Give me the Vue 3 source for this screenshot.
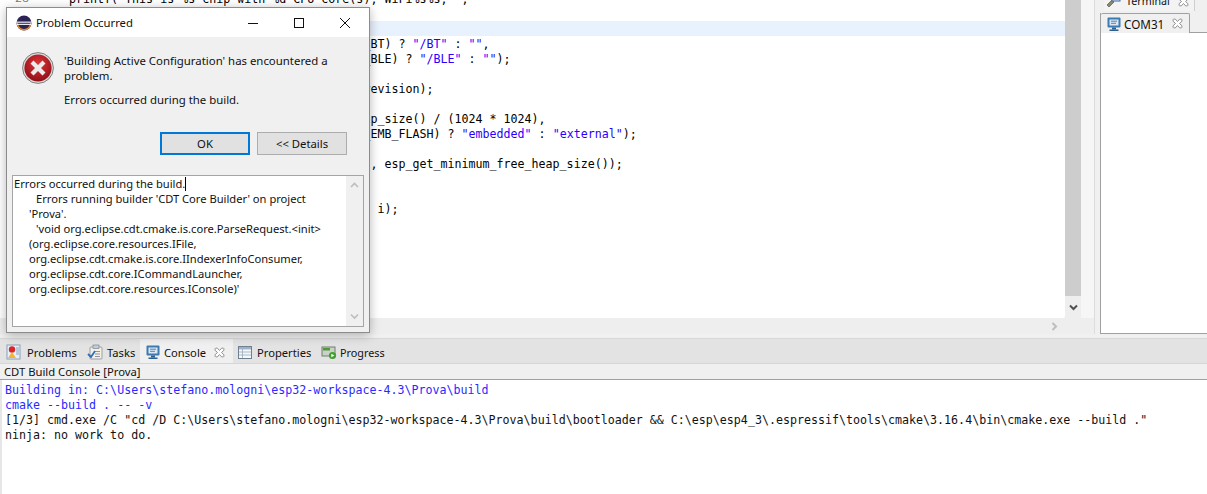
<script setup>
const gutterLines = ['23', '24', '25', '26', '27', '28', '29', '30', '31', '32', '33', '34', '35', '36', '37', '38', '39', '40', '41', '42', '43']
const code = [
  [{ t: '    printf("This is %s chip with %d CPU core(s), WiFi%s%s, ",' }],
  [{ t: ' ' }],
  [{ t: ' ' }],
  [{ t: '            (chip_info.features & CHIP_FEATURE_BT) ? ' }, { t: '"/BT"', s: 1 }, { t: ' : ' }, { t: '""', s: 1 }, { t: ',' }],
  [{ t: '            (chip_info.features & CHIP_FEATURE_BLE) ? ' }, { t: '"/BLE"', s: 1 }, { t: ' : ' }, { t: '""', s: 1 }, { t: ');' }],
  [{ t: ' ' }],
  [{ t: '    printf("silicon revision %d, ", chip_info.revision);' }],
  [{ t: ' ' }],
  [{ t: '    printf("%dMB %s flash\\n", spi_flash_get_chip_size() / (1024 * 1024),' }],
  [{ t: '            (chip_info.features & CHIP_FEATURE_EMB_FLASH) ? ' }, { t: '"embedded"', s: 1 }, { t: ' : ' }, { t: '"external"', s: 1 }, { t: ');' }],
  [{ t: ' ' }],
  [{ t: '    printf("Minimum free heap size: %d bytes\\n", esp_get_minimum_free_heap_size());' }],
  [{ t: ' ' }],
  [{ t: ' ' }],
  [{ t: '        printf("Restarting in %d seconds...\\n", i);' }]
]
const detailLines = [
  { text: 'Errors occurred during the build.', cls: 'l0', caret: true },
  { text: "Errors running builder 'CDT Core Builder' on project", cls: 'l1' },
  { text: "'Prova'.", cls: 'l2' },
  { text: "'void org.eclipse.cdt.cmake.is.core.ParseRequest.<init>", cls: 'l1' },
  { text: '(org.eclipse.core.resources.IFile,', cls: 'l2' },
  { text: 'org.eclipse.cdt.cmake.is.core.IIndexerInfoConsumer,', cls: 'l2' },
  { text: 'org.eclipse.cdt.core.ICommandLauncher,', cls: 'l2' },
  { text: 'org.eclipse.cdt.core.resources.IConsole)\'', cls: 'l2' }
]
</script>

<template>
  <div class="page">
    <div class="top">
      <section class="editor">
        <div class="editor-main">
          <div class="code-area">
            <div class="gutter">
              <div v-for="n in gutterLines" :key="n">{{ n }}</div>
            </div>
            <div class="code">
              <div v-for="(line, i) in code" :key="i" class="code-line" :class="{ current: i === 2 }"><span v-for="(p, j) in line" :key="j" :class="{ str: p.s }">{{ p.t }}</span></div>
            </div>
          </div>
          <div class="vscroll">
            <div class="vthumb"></div>
            <svg class="vdown" width="9" height="7" viewBox="0 0 9 7"><path d="M1 1.5 L4.5 5 L8 1.5" fill="none" stroke="#505050" stroke-width="2"/></svg>
          </div>
          <div class="ruler"></div>
        </div>
        <div class="hscroll">
          <svg width="7" height="9" viewBox="0 0 7 9"><path d="M1.5 1 L5 4.5 L1.5 8" fill="none" stroke="#bdbdbd" stroke-width="2"/></svg>
        </div>
      </section>
      <aside class="right">
        <div class="tab-strip-up">
          <div class="term-tab">
            <svg width="15" height="14" viewBox="0 0 15 14"><path d="M1 11 L6 6 L8 8 L3 13 Z" fill="#8a8a6a" stroke="#444" stroke-width=".6"/><rect x="6" y="1" width="8" height="6" fill="#dfe8f4" stroke="#3f66a0"/></svg>
            <span class="term-name">Terminal</span>
            <svg class="x" width="11" height="11" viewBox="0 0 10 10"><path d="M1.5 1 L3 1 L5 3.2 L7 1 L8.5 1 L9 1.5 L9 3 L6.8 5 L9 7 L9 8.5 L8.5 9 L7 9 L5 6.8 L3 9 L1.5 9 L1 8.5 L1 7 L3.2 5 L1 3 L1 1.5 Z" fill="#fff" stroke="#8f8f8f" stroke-width=".9"/></svg>
          </div>
        </div>
        <div class="com-row">
          <div class="com-tab">
            <svg width="16" height="16" viewBox="0 0 16 16"><rect x="1.5" y="1.5" width="13" height="10" rx="1" fill="#3d7ab0"/><rect x="3.5" y="3.5" width="9" height="6" fill="#dbe8f4"/><path d="M5 5.2H11M5 7.3H10" stroke="#3d7ab0" stroke-width=".9"/><rect x="6" y="11.5" width="4" height="2" fill="#2d5f8c"/><rect x="3.5" y="13.5" width="9" height="1.5" fill="#2d5f8c"/></svg>
            <span class="com-name">COM31</span>
            <svg class="x" width="11" height="11" viewBox="0 0 10 10"><path d="M1.5 1 L3 1 L5 3.2 L7 1 L8.5 1 L9 1.5 L9 3 L6.8 5 L9 7 L9 8.5 L8.5 9 L7 9 L5 6.8 L3 9 L1.5 9 L1 8.5 L1 7 L3.2 5 L1 3 L1 1.5 Z" fill="#fff" stroke="#8f8f8f" stroke-width=".9"/></svg>
          </div>
        </div>
        <div class="com-body"></div>
      </aside>
    </div>

    <div class="gap"></div>

    <nav class="tabs">
      <div class="tab t-problems">
        <svg width="16" height="16" viewBox="0 0 16 16"><rect x="1" y="1" width="13" height="14" fill="#e8eef6" stroke="#8aa0bc"/><circle cx="6" cy="5.5" r="3.2" fill="#d8262c"/><path d="M2 14 L6 8 L10 14 Z" fill="#f2b632"/><rect x="10" y="3" width="3" height="8" fill="#b9c8da"/></svg>
        <span>Problems</span>
      </div>
      <div class="tab t-tasks">
        <svg width="16" height="16" viewBox="0 0 16 16"><rect x="3" y="3" width="12" height="12" rx="1" fill="#f4f1e4" stroke="#9a9fa8"/><rect x="6" y="1" width="6" height="3.5" fill="#c5ccd6" stroke="#7d8794" stroke-width=".7"/><path d="M8 7.5H13M8 10H13M8 12.5H13" stroke="#8b95a5" stroke-width="1"/><path d="M1 10 L4 13 L8 7" fill="none" stroke="#2f6fc0" stroke-width="1.8"/></svg>
        <span>Tasks</span>
      </div>
      <div class="tab active">
        <svg width="16" height="16" viewBox="0 0 16 16"><rect x="1.5" y="1.5" width="13" height="10" rx="1" fill="#3d7ab0"/><rect x="3.5" y="3.5" width="9" height="6" fill="#dbe8f4"/><path d="M5 5.2H11M5 7.3H10" stroke="#3d7ab0" stroke-width=".9"/><rect x="6" y="11.5" width="4" height="2" fill="#2d5f8c"/><rect x="3.5" y="13.5" width="9" height="1.5" fill="#2d5f8c"/></svg>
        <span>Console</span>
        <svg class="x" width="11" height="11" viewBox="0 0 10 10"><path d="M1.5 1 L3 1 L5 3.2 L7 1 L8.5 1 L9 1.5 L9 3 L6.8 5 L9 7 L9 8.5 L8.5 9 L7 9 L5 6.8 L3 9 L1.5 9 L1 8.5 L1 7 L3.2 5 L1 3 L1 1.5 Z" fill="#fff" stroke="#8f8f8f" stroke-width=".9"/></svg>
      </div>
      <div class="tab t-props">
        <svg width="16" height="16" viewBox="0 0 16 16"><rect x="1.5" y="2.5" width="13" height="12" fill="#f5f8fb" stroke="#6f7f92"/><rect x="2" y="3" width="12" height="2.4" fill="#9db2c9"/><path d="M5.5 5V14M2 8H14M2 11H14" stroke="#9aa8b8" stroke-width=".8"/></svg>
        <span>Properties</span>
      </div>
      <div class="tab t-progress">
        <svg width="16" height="16" viewBox="0 0 16 16"><rect x="1" y="3" width="13" height="9" fill="#c9d3c5" stroke="#6f7f6f"/><rect x="2" y="4" width="7" height="2.5" fill="#4e9a3a"/><circle cx="11.5" cy="11.5" r="3.6" fill="#43a02f"/><path d="M10.3 9.7 L13.4 11.5 L10.3 13.3 Z" fill="#fff"/></svg>
        <span class="progress-name">Progress</span>
      </div>
    </nav>

    <div class="console-label">CDT Build Console [Prova]</div>

    <pre class="console"><span class="blue">Building in: C:\Users\stefano.mologni\esp32-workspace-4.3\Prova\build
cmake --build . -- -v
</span>[1/3] cmd.exe /C "cd /D C:\Users\stefano.mologni\esp32-workspace-4.3\Prova\build\bootloader &amp;&amp; C:\esp\esp4_3\.espressif\tools\cmake\3.16.4\bin\cmake.exe --build ."
ninja: no work to do.</pre>

    <div class="dialog">
      <header class="titlebar">
        <svg class="logo" width="16" height="16" viewBox="0 0 16 16">
          <circle cx="8" cy="8" r="7.5" fill="#2c2255"/>
          <path d="M0.5 8 A7.5 7.5 0 0 0 15.5 8 L14 8 A6 6 0 0 1 2 8 Z" fill="#f7941e" opacity=".9"/>
          <rect x="0.5" y="6.6" width="15" height="1.1" fill="#fff"/>
          <rect x="0.8" y="8.8" width="14.4" height="1.1" fill="#fff"/>
        </svg>
        <span class="title">Problem Occurred</span>
        <div class="winbtns">
          <svg width="12" height="12" viewBox="0 0 12 12"><path d="M1 6.5H11" stroke="#111" stroke-width="1"/></svg>
          <svg width="12" height="12" viewBox="0 0 12 12"><rect x="1.5" y="1.5" width="9" height="9" fill="none" stroke="#111"/></svg>
          <svg width="12" height="12" viewBox="0 0 12 12"><path d="M1 1L11 11M11 1L1 11" stroke="#111" stroke-width="1"/></svg>
        </div>
      </header>
      <div class="dialog-body">
        <div class="message">
          <svg class="err" width="32" height="32" viewBox="0 0 32 32">
            <defs>
              <radialGradient id="rg" cx=".5" cy=".35" r=".7"><stop offset="0" stop-color="#e0343a"/><stop offset="1" stop-color="#8a0c14"/></radialGradient>
            </defs>
            <circle cx="16" cy="16" r="15.4" fill="#dcdcdc" stroke="#7f7f7f"/>
            <circle cx="16" cy="16" r="13.6" fill="url(#rg)"/>
            <path d="M8.5 11.5 L11.5 8.5 L16 13 L20.5 8.5 L23.5 11.5 L19 16 L23.5 20.5 L20.5 23.5 L16 19 L11.5 23.5 L8.5 20.5 L13 16 Z" fill="#ececec"/>
          </svg>
          <div class="msg-text">
            <p>'Building Active Configuration' has encountered a problem.</p>
            <p class="sub">Errors occurred during the build.</p>
          </div>
        </div>
        <div class="buttons">
          <button class="btn default">OK</button>
          <button class="btn">&lt;&lt; Details</button>
        </div>
        <div class="details">
          <div class="details-text">
            <div v-for="(l, i) in detailLines" :key="i" :class="l.cls">{{ l.text }}<span v-if="l.caret" class="caret"></span></div>
          </div>
          <div class="d-scroll">
            <svg width="9" height="7" viewBox="0 0 9 7"><path d="M1 5 L4.5 1.5 L8 5" fill="none" stroke="#bdbdbd" stroke-width="1.6"/></svg>
            <svg width="9" height="7" viewBox="0 0 9 7"><path d="M1 1.5 L4.5 5 L8 1.5" fill="none" stroke="#bdbdbd" stroke-width="1.6"/></svg>
          </div>
        </div>
      </div>
    </div>
  </div>
</template>

<style>
html, body { margin: 0; background: #fff; }
</style>

<style scoped>
.page {
  position: relative;
  width: 1207px;
  height: 494px;
  overflow: hidden;
  display: flex;
  flex-direction: column;
  background: #fff;
  font-family: "Noto Sans", sans-serif;
  font-size: 11.3px;
  color: #111;
}
.top { display: flex; height: 334px; background: #f0f0f0; flex: none; }
.editor { width: 1095px; display: flex; flex-direction: column; border-right: 1px solid #dcdcdc; box-sizing: border-box; }
.editor-main { flex: 1; display: flex; min-height: 0; }
.code-area { width: 1065px; flex: none; display: flex; background: #fff; overflow: hidden; border-bottom-right-radius: 2px; }
.gutter { width: 41px; flex: none; margin-top: -9px; text-align: right; box-sizing: border-box; padding-right: 12px; font: 11.67px/17px "Liberation Mono", monospace; color: #787878; }
.gutter div { height: 15px; }
.code { flex: 1; margin-top: -9px; font: 11.65px/17px "DejaVu Sans Mono", monospace; color: #000; white-space: pre; }
.code-line { height: 15px; }
.code-line.current { background: #e8f2fe; }
.str { color: #2a00ff; }
.vscroll { width: 16px; flex: none; background: #eeeeee; display: flex; flex-direction: column; align-items: center; justify-content: space-between; padding-bottom: 7px; box-sizing: border-box; position: relative; }
.vthumb { width: 100%; height: 296px; background: #cdcdcd; }
.ruler { flex: 1; background: #f6f6f6; }
.hscroll { height: 16px; flex: none; background: #eeeeee; display: flex; align-items: center; justify-content: flex-end; padding-right: 36px; }
.right { flex: 1; display: flex; flex-direction: column; padding-left: 5px; }
.tab-strip-up { height: 13px; overflow: hidden; display: flex; padding-left: 4px; flex: none; }
.term-tab { display: flex; align-items: center; gap: 5px; height: 20px; margin-top: -9px; width: 91px; background: #f3f3f3; box-sizing: border-box; border-right: 1px solid #cfcfcf; padding-left: 2px; flex: none; }
.term-name { font-size: 10.7px; }
.term-tab .x { margin-left: 3px; }
.com-row { height: 20px; flex: none; display: flex; box-sizing: border-box; border-left: 1px solid #a0a0a0; border-bottom: 1px solid #a0a0a0; }
.com-tab { width: 89px; height: 20px; box-sizing: border-box; background: #f0f0f0; border: 1px solid #a0a0a0; border-left: 0; border-bottom: 0; border-radius: 2px 2px 0 0; display: flex; align-items: center; gap: 2px; padding-left: 5px; }
.com-name { font-size: 11.7px; }
.com-tab .x { margin-left: 6px; }
.com-body { flex: 1; background: #fff; border-left: 1px solid #a0a0a0; border-bottom: 1px solid #a0a0a0; }
.gap { height: 5px; flex: none; background: #f0f0f0; border-bottom: 1px solid #d8d8d8; box-sizing: border-box; }
.tabs { height: 25px; flex: none; display: flex; background: #e3e3e3; border-bottom: 1px solid #d6d6d6; box-sizing: border-box; padding-left: 6px; font-size: 11.2px; }
.tab { display: flex; align-items: center; gap: 4px; height: 24px; box-sizing: border-box; padding-top: 2px; }
.t-problems { width: 81px; gap: 5px; }
.t-tasks { width: 53px; }
.tab.active { background: #f0f0f0; width: 93px; padding-left: 5px; gap: 3px; }
.t-props { width: 88px; padding-left: 4px; }
.t-progress { width: 70px; gap: 3px; }
.progress-name { font-size: 10.8px; }
.x { margin-left: 5px; }
.console-label { height: 16px; flex: none; background: #f0f0f0; border-bottom: 1px solid #a0a0a0; box-sizing: border-box; padding-left: 4px; line-height: 16px; font-size: 11.25px; }
.console { flex: 1; margin: 0; padding: 3px 0 0 3px; border-left: 2px solid #e6e6e6; font: 11.65px/15px "DejaVu Sans Mono", monospace; color: #111; }
.blue { color: #2a2aff; }
.dialog { position: absolute; left: 6px; top: 7px; width: 364px; height: 326px; box-sizing: border-box; background: #f0f0f0; border: 1px solid #8c8c8c; box-shadow: 0 2px 10px rgba(0,0,0,.28); display: flex; flex-direction: column; }
.titlebar { height: 29px; flex: none; background: #fff; display: flex; align-items: center; padding-left: 9px; }
.logo { flex: none; }
.title { margin-left: 4px; }
.winbtns { margin-left: auto; display: flex; gap: 34px; padding-right: 18px; align-items: center; }
.dialog-body { flex: 1; display: flex; flex-direction: column; padding: 0 5px 5px; min-height: 0; }
.message { display: flex; padding: 15px 0 0 10px; gap: 10px; height: 95px; box-sizing: border-box; flex: none; font-size: 11.4px; }
.err { flex: none; }
.msg-text { width: 272px; line-height: 15px; padding-top: 1px; }
.msg-text p { margin: 0; }
.msg-text .sub { margin-top: 9px; }
.buttons { display: flex; justify-content: flex-end; gap: 7px; padding-right: 17px; height: 43px; flex: none; }
.btn { width: 90px; height: 23px; background: #e1e1e1; border: 1px solid #adadad; padding: 0; font: inherit; color: #111; }
.btn.default { border: 2px solid #0078d7; }
.details { flex: 1; display: flex; background: #fff; border: 1px solid #a5a5a5; min-height: 0; }
.details-text { flex: 1; padding: 0 0 0 1px; line-height: 15px; font-size: 11.15px; }
.l1 { padding-left: 22px; }
.l2 { padding-left: 15px; }
.caret { display: inline-block; width: 1px; height: 14px; background: #000; vertical-align: -3px; }
.d-scroll { width: 17px; flex: none; background: #f0f0f0; display: flex; flex-direction: column; align-items: center; justify-content: space-between; padding: 6px 0; box-sizing: border-box; }
</style>
